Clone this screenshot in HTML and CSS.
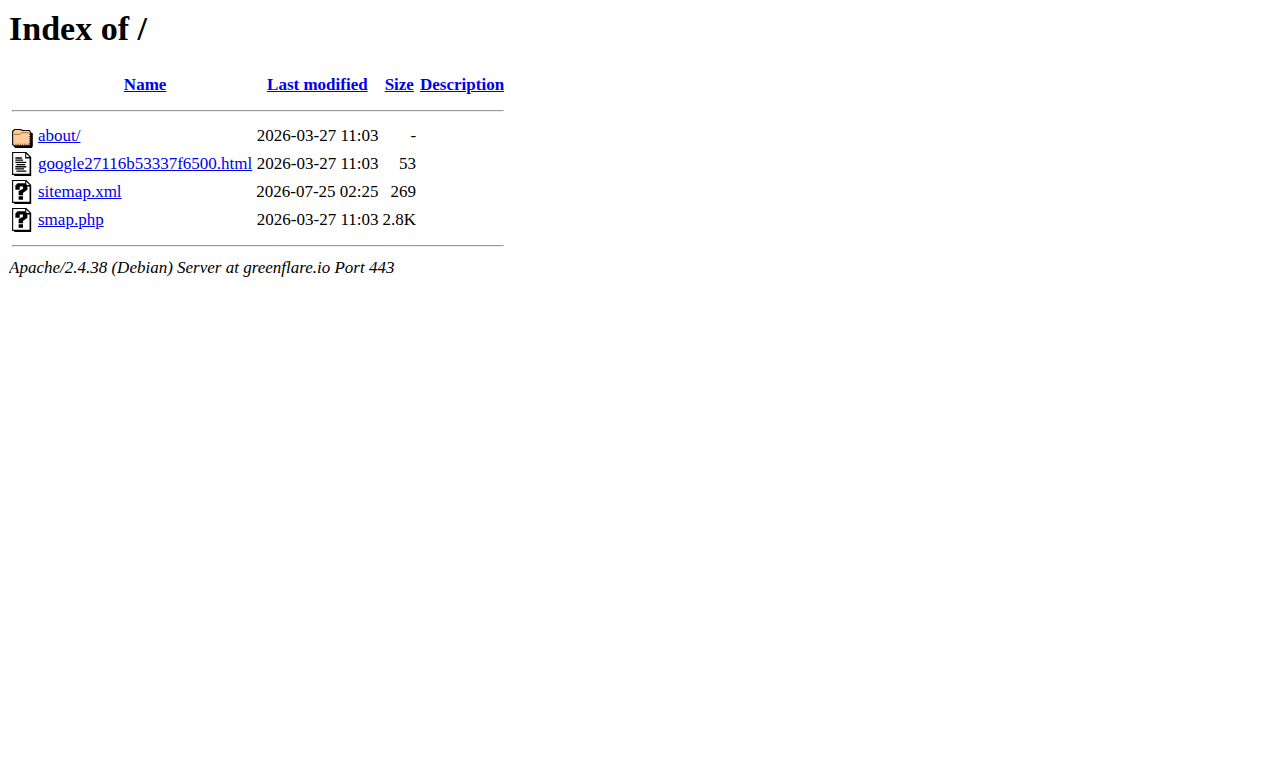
FILE: index.html
```
<!DOCTYPE html>
<html lang="en">
<head>
  <meta charset="UTF-8" />
  <meta name="viewport" content="width=device-width, initial-scale=1.0"/>
  <title>Index of /</title>
  <link rel="stylesheet" href="styles.css">
</head>
<body>

  <!-- icons used in the listing -->
  <svg class="sprites" xmlns="http://www.w3.org/2000/svg" width="0" height="0" aria-hidden="true">
    <symbol id="icon-folder" viewBox="0 0 20 22">
      <path fill="#000" d="M2 4.500h6l2 1h6l1 1v1l2 1v12l-1 1.500H3l-1-1-2-2V6.500z"/>
      <path fill="#ffcc99" d="M2.500 5.500h5l2 1h6l1 1v11l-1 1H2l-1-1V7z"/>
      <path fill="none" stroke="#996633" stroke-width=".8" d="M1.500 9.500h5.500l2-1.500h7"/>
      <path fill="none" stroke="#664422" stroke-dasharray="1 1" d="M3 18.500h13M16 9v9"/>
    </symbol>
    <symbol id="icon-text" viewBox="0 0 20 22">
      <path fill="#000" d="M0 0h13l4.500 4.500V22H2v-1H0z"/>
      <path fill="#fff" d="M1 1h11v5h4v14H1z"/>
      <path fill="#fff" d="M13 1.500l3 3h-3z"/>
      <path fill="none" stroke="#000" stroke-width="1.200" d="M3 5.500h6M3 7.500h7M3 9.500h10M4 11.500h8M3 13.500h10M3 15.500h8M4 17.500h9"/>
    </symbol>
    <symbol id="icon-unknown" viewBox="0 0 20 22">
      <path fill="#000" d="M0 0h13l4.500 4.500V22H2v-1H0z"/>
      <path fill="#fff" d="M1 1h11v5h4v14H1z"/>
      <path fill="#fff" d="M13 1.500l3 3h-3z"/>
      <path fill="#000" d="M3 5l2-2h7l2 2v4l-4 3v2H6v-4l4-2V6H7v3H3zM6 15h4v3H6z"/>
    </symbol>
  </svg>

  <h1>Index of /</h1>

  <table>
    <tr>
      <th><span class="icon"></span></th>
      <th><a href="?C=N;O=D">Name</a></th>
      <th><a href="?C=M;O=A">Last modified</a></th>
      <th><a href="?C=S;O=A">Size</a></th>
      <th><a href="?C=D;O=A">Description</a></th>
    </tr>
    <tr><th colspan="5"><hr></th></tr>
    <tr>
      <td><svg class="icon" role="img" aria-label="[DIR]"><use href="#icon-folder"/></svg></td>
      <td><a href="about/">about/</a></td>
      <td class="right">2026-03-27 11:03</td>
      <td class="right">-</td>
      <td></td>
    </tr>
    <tr>
      <td><svg class="icon" role="img" aria-label="[TXT]"><use href="#icon-text"/></svg></td>
      <td><a href="google27116b53337f6500.html">google27116b53337f6500.html</a></td>
      <td class="right">2026-03-27 11:03</td>
      <td class="right">53</td>
      <td></td>
    </tr>
    <tr>
      <td><svg class="icon" role="img" aria-label="[   ]"><use href="#icon-unknown"/></svg></td>
      <td><a href="sitemap.xml">sitemap.xml</a></td>
      <td class="right">2026-07-25 02:25</td>
      <td class="right">269</td>
      <td></td>
    </tr>
    <tr>
      <td><svg class="icon" role="img" aria-label="[   ]"><use href="#icon-unknown"/></svg></td>
      <td><a href="smap.php">smap.php</a></td>
      <td class="right">2026-03-27 11:03</td>
      <td class="right">2.8K</td>
      <td></td>
    </tr>
    <tr><th colspan="5"><hr></th></tr>
  </table>

  <address>Apache/2.4.38 (Debian) Server at greenflare.io Port 443</address>

</body>
</html>
```
FILE: styles.css
```
body {
  margin: 9px;
  font-family: "Liberation Serif", "Times New Roman", serif;
  font-size: 17px;
  line-height: 20px;
  background-color: white;
  color: black;
}

h1 {
  margin: 0 0 21px;
  font-size: 34px;
  line-height: 40px;
}

a {
  color: #0000ee;
}

.sprites {
  position: absolute;
}

.icon {
  display: block;
  width: 22px;
  height: 24px;
}

.right {
  text-align: right;
}

address {
  font-style: italic;
}
```
